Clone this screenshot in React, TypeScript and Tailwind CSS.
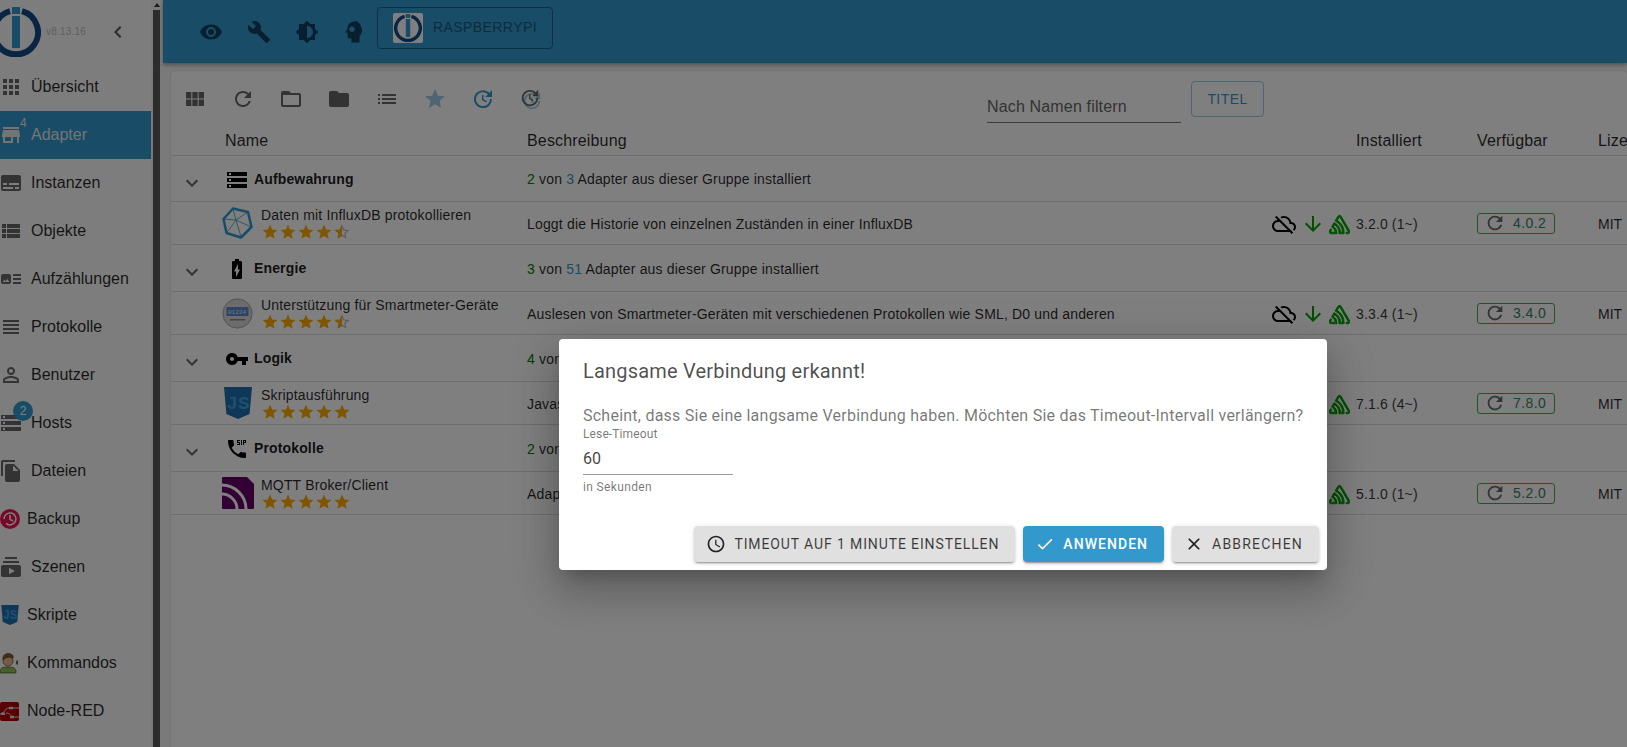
import type { ReactNode } from 'react';
import {
  MdAccessTime,
  MdApps,
  MdArrowDownward,
  MdArtTrack,
  MdBatteryChargingFull,
  MdBrightness6,
  MdBuild,
  MdCheck,
  MdChevronLeft,
  MdClose,
  MdDialerSip,
  MdExpandMore,
  MdFileCopy,
  MdFolder,
  MdFolderOpen,
  MdList,
  MdOutlineCloudOff,
  MdPersonOutline,
  MdRefresh,
  MdStar,
  MdStarBorder,
  MdStorage,
  MdStore,
  MdSubscriptions,
  MdSubtitles,
  MdUpdate,
  MdViewHeadline,
  MdViewList,
  MdViewModule,
  MdVisibility,
  MdVpnKey,
} from 'react-icons/md';
import { SiSentry } from 'react-icons/si';

function IoBrokerLogo({ size }: { size: number }) {
  return (
    <svg width={size} height={size} viewBox="0 0 50 50" className="shrink-0">
      <path d="M19 4.2a22 22 0 1 0 12 0" fill="none" stroke="#134a86" strokeWidth="6" />
      <rect x="21" y="0" width="8" height="7" fill="#3399cc" />
      <rect x="21" y="9" width="8" height="32" fill="#3399cc" />
    </svg>
  );
}

function JsShield({ size }: { size: number }) {
  return (
    <svg width={size} height={size} viewBox="0 0 30 32" className="shrink-0">
      <path d="M1 0h28l-2.400 27L15 32 3.400 27z" fill="#1f6fb0" />
      <text x="15" y="22" textAnchor="middle" fontSize="19" fontWeight="700" fill="#3aa0dd" fontFamily="'Liberation Mono', monospace">JS</text>
    </svg>
  );
}

function BackupIcon() {
  return (
    <svg width="20" height="20" viewBox="0 0 20 20" className="shrink-0">
      <circle cx="10" cy="10" r="10" fill="#f0104f" />
      <path d="M4 10a6 6 0 1 1 2 4.400M10 6v4.400l3 1.600" fill="none" stroke="#fff" strokeWidth="1.500" />
    </svg>
  );
}

function CommandsIcon() {
  return (
    <svg width="20" height="22" viewBox="0 0 20 22" className="shrink-0">
      <path d="M0 20c0-4 3-5 8-5s8 1 8 5v1H0z" fill="#8fc04f" stroke="#333" strokeWidth="0.6" />
      <circle cx="8" cy="9" r="5" fill="#f0b58a" stroke="#333" strokeWidth="0.6" />
      <path d="M3 8c-1-5 3-7 6-6.500s5 2 4 5c-2-2-7-2-10 1.500z" fill="#8a5a2b" stroke="#333" strokeWidth="0.5" />
      <path d="M16 9l2-1v5l-2-1z" fill="#666" />
    </svg>
  );
}

function NodeRedIcon() {
  return (
    <svg width="19" height="19" viewBox="0 0 19 19" className="shrink-0">
      <rect width="19" height="19" rx="2" fill="#b00000" />
      <path d="M0 12c5 0 4-6 9-6h10M6 11c5 0 4 4 9 4h4" fill="none" stroke="#ddd" strokeWidth="1" />
      <rect x="1" y="10.500" width="4" height="2.500" fill="#ddd" />
      <rect x="9" y="4.800" width="4" height="2.500" fill="#ddd" />
      <rect x="10" y="13.800" width="4" height="2.500" fill="#ddd" />
    </svg>
  );
}

function InfluxIcon() {
  return (
    <svg width="31" height="32" viewBox="0 0 31 32" className="shrink-0 -translate-x-[1px]">
      <path d="M11 1.500 26 5l3.500 15-10.500 10.500L4.500 26 1.500 12z" fill="none" stroke="#3399cc" strokeWidth="2.500" strokeLinejoin="round" />
      <path d="M11 2l3 11 12-8M14 13 1.500 12M14 13l5 17M14 13l15 7M4.500 26 14 13" fill="none" stroke="#3399cc" strokeWidth="0.8" />
    </svg>
  );
}

function SmartmeterIcon() {
  return (
    <svg width="31" height="31" viewBox="0 0 31 31" className="shrink-0 -translate-x-[1px]">
      <circle cx="15.500" cy="15.500" r="15" fill="#d8d8d8" />
      <circle cx="15.500" cy="15.500" r="14.500" fill="none" stroke="#aaa" />
      <rect x="4.500" y="9" width="22" height="9" fill="#5a88cc" />
      <text x="15" y="16" textAnchor="middle" fontSize="6" fill="#dfefff" fontFamily="'Liberation Mono', monospace">01234</text>
      <rect x="8" y="21" width="15" height="1.500" fill="#888" />
    </svg>
  );
}

function MqttIcon() {
  return (
    <svg width="32" height="32" viewBox="0 0 32 32" className="shrink-0">
      <rect width="32" height="32" rx="1" fill="#660066" />
      <path d="M0 8c13 0 24 11 24 24M0 17c8 0 15 7 15 15" fill="none" stroke="#fff" strokeWidth="3" />
      <path d="M25 0h7v7z" fill="#fff" />
    </svg>
  );
}

function HeadIcon() {
  return (
    <svg width="24" height="24" viewBox="0 0 24 24" className="shrink-0 -translate-x-[2px]">
      <path
        fillRule="evenodd"
        fill="currentColor"
        d="M14 1.500c-4.500 0-7.500 3-7.500 7l-2 4h2v4a2 2 0 0 0 2 2h2v4h8v-6.500c1.800-1.800 2.500-3.500 2.500-5.500 0-5-3.500-9.500-7-9.500zM11 6.500a2.800 2.800 0 1 0 .01 0z"
      />
    </svg>
  );
}

function Stars({ half }: { half?: boolean }) {
  return (
    <div className="flex h-[18px] items-center text-[#ffaa00]">
      {[0, 1, 2, 3].map(i => (
        <MdStar key={i} size={18} />
      ))}
      {half ? (
        <span className="relative h-[18px] w-[18px]">
          <MdStarBorder size={18} className="text-[#bbbbbb]" />
          <span className="absolute left-0 top-0 h-[18px] w-[9px] overflow-hidden">
            <MdStar size={18} />
          </span>
        </span>
      ) : (
        <MdStar size={18} />
      )}
    </div>
  );
}

const navItems: { label: string; icon: ReactNode; custom?: boolean; active?: boolean }[] = [
  { label: 'Übersicht', icon: <MdApps size={24} /> },
  { label: 'Adapter', icon: <MdStore size={24} />, active: true },
  { label: 'Instanzen', icon: <MdSubtitles size={24} /> },
  { label: 'Objekte', icon: <MdViewList size={24} /> },
  { label: 'Aufzählungen', icon: <MdArtTrack size={24} /> },
  { label: 'Protokolle', icon: <MdViewHeadline size={24} /> },
  { label: 'Benutzer', icon: <MdPersonOutline size={24} /> },
  { label: 'Hosts', icon: <MdStorage size={24} /> },
  { label: 'Dateien', icon: <MdFileCopy size={24} /> },
  { label: 'Backup', icon: <BackupIcon />, custom: true },
  { label: 'Szenen', icon: <MdSubscriptions size={24} /> },
  { label: 'Skripte', icon: <JsShield size={20} />, custom: true },
  { label: 'Kommandos', icon: <CommandsIcon />, custom: true },
  { label: 'Node-RED', icon: <NodeRedIcon />, custom: true },
];

const rowGrid = 'grid grid-cols-[356px_829px_121px_121px_1fr] items-center';

function Sidebar() {
  return (
    <aside className="flex h-full w-[163px] shrink-0 bg-[#f5f5f5]">
      <div className="w-[151px] shrink-0 bg-[#fafafa]">
        <div className="flex h-[63px] items-center">
          <div className="-ml-[9px]">
            <IoBrokerLogo size={50} />
          </div>
          <span className="ml-[5px] text-[10px] tracking-[0.02em] text-[#c0c0c0]">v8.13.16</span>
          <MdChevronLeft size={24} className="ml-[20px] text-[#555555]" />
        </div>
        {navItems.map(item => (
          <div
            key={item.label}
            className={`relative flex h-[48px] items-center text-[16px] ${item.active ? 'bg-[#3399cc] text-[#e8e8e8]' : 'text-black/85'}`}
          >
            {item.custom ? (
              <>
                <span className="flex w-[20px] shrink-0">{item.icon}</span>
                <span className="ml-[7px]">{item.label}</span>
              </>
            ) : (
              <>
                <span className={`-ml-[1px] flex w-[24px] shrink-0 justify-center ${item.active ? 'text-[#e8e8e8]' : 'text-[#666666]'}`}>{item.icon}</span>
                <span className="ml-[8px]">{item.label}</span>
              </>
            )}
            {item.label === 'Adapter' && <span className="absolute left-[20px] top-[3px] text-[12px]">4</span>}
            {item.label === 'Hosts' && (
              <span className="absolute left-[13px] top-[2px] flex h-[20px] w-[20px] items-center justify-center rounded-full bg-[#3399cc] text-[12px] text-white">2</span>
            )}
          </div>
        ))}
      </div>
      <div className="ml-[2px] w-[7px] shrink-0">
        <div className="flex h-[10px] items-center justify-center">
          <div className="h-0 w-0 border-x-[3px] border-b-[4px] border-x-transparent border-b-[#333333]" />
        </div>
        <div className="h-full bg-[#5a5a5a]" />
      </div>
    </aside>
  );
}

function TopBar() {
  return (
    <header className="flex h-[63px] shrink-0 items-center bg-[#3399cc] pl-[24px] pr-4 shadow-[0_2px_4px_rgba(0,0,0,0.35)]">
      {[<MdVisibility key="v" size={24} />, <MdBuild key="b" size={24} />, <MdBrightness6 key="s" size={24} />, <HeadIcon key="h" />].map((icon, i) => (
        <span key={i} className="flex h-[48px] w-[48px] items-center justify-center text-[#0f3f5c]">
          {icon}
        </span>
      ))}
      <div className="-ml-[2px] -mt-[8px] flex h-[42px] w-[176px] items-center rounded-[4px] border border-[#1c5f85] pl-[15px]">
        <span className="flex h-[30px] w-[30px] items-center justify-center rounded-[2px] bg-white">
          <IoBrokerLogo size={28} />
        </span>
        <span className="ml-[10px] text-[14px] tracking-[0.03em] text-[#1a5880]">RASPBERRYPI</span>
      </div>
    </header>
  );
}

function Toolbar() {
  const icons = [
    <MdViewModule key="0" size={24} className="text-[#666666]" />,
    <MdRefresh key="1" size={24} className="text-[#666666]" />,
    <MdFolderOpen key="2" size={24} className="text-[#666666]" />,
    <MdFolder key="3" size={24} className="text-[#666666]" />,
    <MdList key="4" size={24} className="text-[#666666]" />,
    <MdStar key="5" size={24} className="text-[#9ecbe2]" />,
    <MdUpdate key="6" size={24} className="text-[#3399cc]" />,
    <span key="7" className="relative block h-[24px] w-[24px]">
      <MdUpdate size={22} className="absolute left-[2px] top-[3px] text-[#9ecbe2]" />
      <MdUpdate size={22} className="absolute left-0 top-0 text-[#666666]" />
    </span>,
  ];
  return (
    <div className="flex h-[56px] items-center">
      {icons.map((icon, i) => (
        <span key={i} className="flex h-[48px] w-[48px] items-center justify-center">
          {icon}
        </span>
      ))}
      <div className="ml-[432px] mt-[16px] flex h-[36px] w-[194px] items-end self-start border-b border-[#777777] pb-[3px] text-[16px] tracking-[0.01em] text-[#666666]">
        Nach Namen filtern
      </div>
      <div className="ml-[10px] flex h-[36px] w-[73px] items-center justify-center rounded-[4px] border border-[#3399cc]/50 text-[14px] tracking-[0.03em] text-[#3399cc]">
        TITEL
      </div>
    </div>
  );
}

function GroupRow({ icon, name, installed, total, height }: { icon: ReactNode; name: string; installed: number; total: number; height: string }) {
  return (
    <div className={`${rowGrid} ${height} border-b border-[#dddddd] pt-[2px]`}>
      <div className="flex items-center">
        <MdExpandMore size={24} className="ml-[9px] mt-[6px] text-[#666666]" />
        <span className="ml-[17px] flex w-[32px] justify-center text-black">{icon}</span>
        <span className="ml-[1px] -mt-[1px] text-[14px] font-bold tracking-[0.01em] text-black/90">{name}</span>
      </div>
      <div className="text-[14px] tracking-[0.012em] text-black/85">
        <span className="text-[#008000]">{installed}</span> von <span className="text-[#3399cc]">{total}</span> Adapter aus dieser Gruppe installiert
      </div>
    </div>
  );
}

function ItemRow({
  icon,
  name,
  half,
  description,
  installed,
  available,
}: {
  icon: ReactNode;
  name: string;
  half?: boolean;
  description: string;
  installed: string;
  available: string;
}) {
  return (
    <div className={`${rowGrid} h-[43px] border-b border-[#dddddd] pt-[2px]`}>
      <div className="flex items-center pl-[51px]">
        <span className="-mt-[2px] flex w-[32px] justify-center">{icon}</span>
        <div className="ml-[7px]">
          <div className="text-[14px] leading-[16px] tracking-[0.012em] text-black/85">{name}</div>
          <Stars half={half} />
        </div>
      </div>
      <div className="flex items-center pr-[6px] text-[14px] tracking-[0.012em] text-black/85">
        <span>{description}</span>
        <MdOutlineCloudOff size={24} className="ml-auto text-black" />
        <MdArrowDownward size={24} className="ml-[5px] text-[#00a000]" />
        <SiSentry size={21} stroke="currentColor" strokeWidth={1} className="ml-[4px] text-[#00a000]" />
      </div>
      <div className="text-[14px] tracking-[0.01em] text-black/80">{installed}</div>
      <div className="-mt-[2px] flex h-[21px] w-[78px] items-center rounded-[3px] border border-[#008000]/70 pl-[6px]">
        <MdRefresh size={22} className="text-[#666666]" />
        <span className="ml-[7px] text-[14px] tracking-[0.03em] text-[#408060]">{available}</span>
      </div>
      <div className="text-[14px] text-black/85">MIT</div>
    </div>
  );
}

function SlowConnectionDialog() {
  const base = 'flex h-[36px] items-center rounded-[4px] pl-[12px] pr-[16px] text-[14px] shadow-[0_3px_1px_-2px_rgba(0,0,0,0.2),0_2px_2px_0_rgba(0,0,0,0.14),0_1px_5px_0_rgba(0,0,0,0.12)]';
  return (
    <div className="absolute left-[559px] top-[339px] flex h-[231px] w-[768px] flex-col rounded-[4px] bg-white font-['Roboto',sans-serif] shadow-[0_11px_15px_-7px_rgba(0,0,0,0.2),0_24px_38px_3px_rgba(0,0,0,0.14),0_9px_46px_8px_rgba(0,0,0,0.12)]">
      <h2 className="px-[24px] pt-[16px] text-[20px] leading-[32px] tracking-[0.01em] text-black/70">Langsame Verbindung erkannt!</h2>
      <div className="pl-[24px] pt-[17px]">
        <p className="whitespace-nowrap text-[16px] leading-[24px] tracking-[0.015em] text-black/55">Scheint, dass Sie eine langsame Verbindung haben. Möchten Sie das Timeout-Intervall verlängern?</p>
        <div className="w-[150px]">
          <div className="-mt-[1px] text-[12px] leading-[14px] tracking-[0.01em] text-black/55">Lese-Timeout</div>
          <div className="mt-[5px] h-[29px] border-b border-black/40 pt-[1px] text-[16px] leading-[24px] text-black/75">60</div>
        </div>
        <div className="mt-[5px] text-[12px] leading-[14px] tracking-[0.03em] text-black/55">in Sekunden</div>
      </div>
      <div className="mt-auto flex justify-end gap-[8px] pb-[8px] pr-[8px]">
        <div className={`${base} bg-[#e0e0e0] tracking-[0.063em] text-black/75`}>
          <MdAccessTime size={20} className="mr-[8px] text-black/85" />
          TIMEOUT AUF 1 MINUTE EINSTELLEN
        </div>
        <div className={`${base} bg-[#3399cc] font-medium tracking-[0.075em] text-white`}>
          <MdCheck size={20} className="mr-[8px]" />
          ANWENDEN
        </div>
        <div className={`${base} bg-[#e0e0e0] tracking-[0.085em] text-black/75`}>
          <MdClose size={20} className="mr-[8px] text-black/85" />
          ABBRECHEN
        </div>
      </div>
    </div>
  );
}

export default function App() {
  return (
    <div className="relative flex h-screen w-full overflow-hidden bg-[#f5f5f5] font-['Liberation_Sans',Arial,sans-serif]">
      <Sidebar />
      <div className="flex min-w-0 flex-1 flex-col">
        <TopBar />
        <main className="ml-[8px] mt-[8px] flex-1 rounded-t-[4px] bg-white shadow-[0_0_2px_rgba(0,0,0,0.2)]">
          <Toolbar />
          <div className={`${rowGrid} h-[29px] border-b border-[#dddddd] text-[16px] tracking-[0.01em] text-black/85`}>
            <div className="pl-[54px]">Name</div>
            <div>Beschreibung</div>
            <div>Installiert</div>
            <div>Verfügbar</div>
            <div>Lizenz</div>
          </div>
          <GroupRow icon={<MdStorage size={24} />} name="Aufbewahrung" installed={2} total={3} height="h-[46px]" />
          <ItemRow
            icon={<InfluxIcon />}
            name="Daten mit InfluxDB protokollieren"
            half
            description="Loggt die Historie von einzelnen Zuständen in einer InfluxDB"
            installed="3.2.0 (1~)"
            available="4.0.2"
          />
          <GroupRow icon={<MdBatteryChargingFull size={24} />} name="Energie" installed={3} total={51} height="h-[47px]" />
          <ItemRow
            icon={<SmartmeterIcon />}
            name="Unterstützung für Smartmeter-Geräte"
            half
            description="Auslesen von Smartmeter-Geräten mit verschiedenen Protokollen wie SML, D0 und anderen"
            installed="3.3.4 (1~)"
            available="3.4.0"
          />
          <GroupRow icon={<MdVpnKey size={24} />} name="Logik" installed={4} total={9} height="h-[47px]" />
          <ItemRow icon={<JsShield size={32} />} name="Skriptausführung" description="Javascript/Blockly Skriptausführung" installed="7.1.6 (4~)" available="7.8.0" />
          <GroupRow icon={<MdDialerSip size={24} />} name="Protokolle" installed={2} total={12} height="h-[47px]" />
          <ItemRow icon={<MqttIcon />} name="MQTT Broker/Client" description="Adapter für MQTT Broker und Client" installed="5.1.0 (1~)" available="5.2.0" />
        </main>
      </div>
      <div className="absolute inset-0 bg-black/50" />
      <SlowConnectionDialog />
    </div>
  );
}
